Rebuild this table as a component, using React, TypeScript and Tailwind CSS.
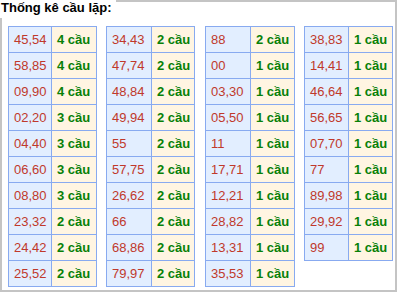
import React from "react";

type Row = [string, number];

const tables: { rows: Row[]; numW: string; txtW: string }[] = [
  {
    numW: "w-[43px]",
    txtW: "w-[45px]",
    rows: [
      ["45,54", 4], ["58,85", 4], ["09,90", 4], ["02,20", 3], ["04,40", 3],
      ["06,60", 3], ["08,80", 3], ["23,32", 2], ["24,42", 2], ["25,52", 2],
    ],
  },
  {
    numW: "w-[45px]",
    txtW: "w-[43px]",
    rows: [
      ["34,43", 2], ["47,74", 2], ["48,84", 2], ["49,94", 2], ["55", 2],
      ["57,75", 2], ["26,62", 2], ["66", 2], ["68,86", 2], ["79,97", 2],
    ],
  },
  {
    numW: "w-[45px]",
    txtW: "w-[44px]",
    rows: [
      ["88", 2], ["00", 1], ["03,30", 1], ["05,50", 1], ["11", 1],
      ["17,71", 1], ["12,21", 1], ["28,82", 1], ["13,31", 1], ["35,53", 1],
    ],
  },
  {
    numW: "w-[44px]",
    txtW: "w-[44px]",
    rows: [
      ["38,83", 1], ["14,41", 1], ["46,64", 1], ["56,65", 1], ["07,70", 1],
      ["77", 1], ["89,98", 1], ["29,92", 1], ["99", 1],
    ],
  },
];

export default function App() {
  return (
    <div
      className="relative w-[397px] h-[292px] border-2 border-[#c4c4c4] bg-white pt-[24px] pl-[6px]"
      style={{ fontFamily: '"Liberation Sans", Arial, sans-serif' }}
    >
      <div className="absolute -top-[2px] -left-[2px] w-[116px] h-[18px] bg-white pl-[1px] text-[13px] leading-[16px] font-bold text-black">
        Thống kê cầu lặp:
      </div>
      <div className="flex items-start">
        {tables.map((t, ti) => (
          <div
            key={ti}
            className={
              "border-l border-t border-[#88aaf0] " +
              (ti === 1 ? "ml-[9px]" : ti === 2 ? "ml-[10px]" : ti === 3 ? "ml-[9px]" : "")
            }
          >
            {t.rows.map(([n, c], ri) => (
              <div key={ri} className="flex h-[26px]">
                <div
                  className={
                    t.numW +
                    " border-r border-b border-[#88aaf0] bg-[#e2eeff] flex items-center pl-[5px] text-[13px] text-[#c0392b]"
                  }
                >
                  {n}
                </div>
                <div
                  className={
                    t.txtW +
                    " border-r border-b border-[#88aaf0] bg-[#fff5e2] flex items-center pl-[5px] text-[13px] font-bold text-[#088008]"
                  }
                >
                  {c} cầu
                </div>
              </div>
            ))}
          </div>
        ))}
      </div>
    </div>
  );
}
